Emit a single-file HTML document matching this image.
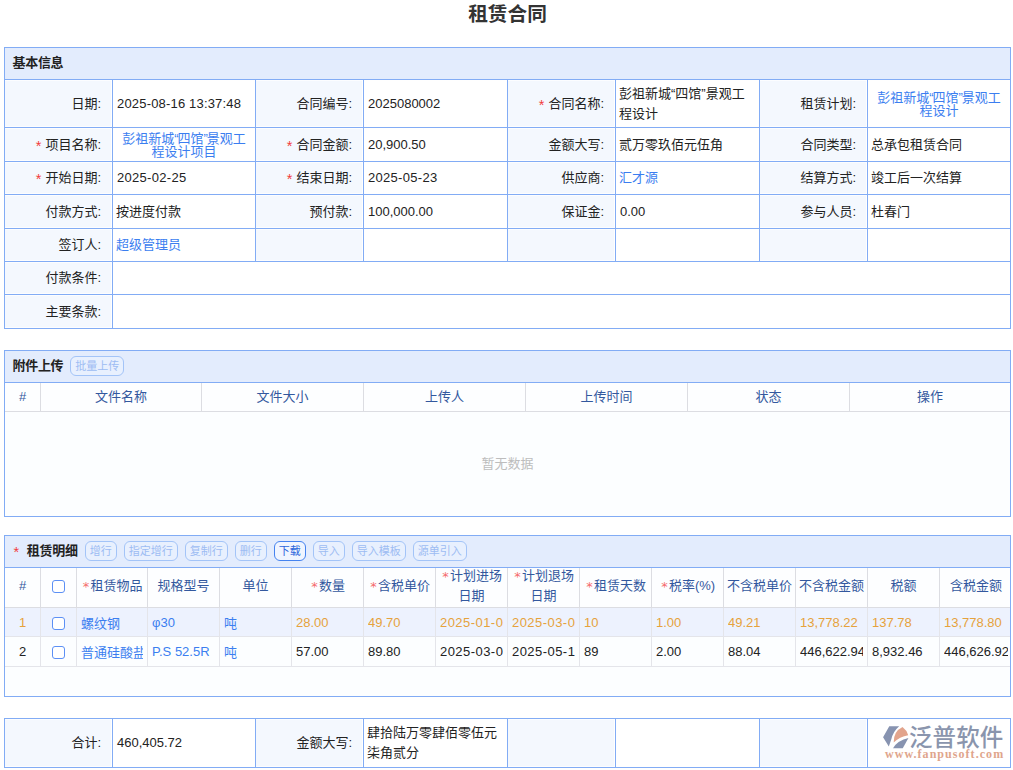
<!DOCTYPE html>
<html lang="zh-CN">
<head>
<meta charset="utf-8">
<title>租赁合同</title>
<style>
*{box-sizing:border-box;margin:0;padding:0}
html,body{width:1013px;height:770px;overflow:hidden;background:#fff}
body{font-family:"Liberation Sans","Noto Sans CJK SC",sans-serif;font-size:13px;color:#222;position:relative}
.title{position:absolute;left:1px;top:0;width:1013px;height:30px;line-height:28px;text-align:center;font-size:19.7px;font-weight:bold;color:#333}
.box{position:absolute;left:4px;width:1007px;border:1px solid #82acf5;background:#fff}
.hd{height:32px;line-height:30px;background:#e3ecfd;border-bottom:1px solid #82acf5;padding-left:7.5px;letter-spacing:-0.3px;font-weight:bold;color:#222;font-size:13px;white-space:nowrap}
table{border-collapse:collapse;table-layout:fixed}
.form{position:absolute;left:4px;width:1006px}
.form td{border:1px solid #82acf5;vertical-align:middle;font-size:13px;line-height:16px;overflow:hidden}
.form td.l{background:#f4f8fe;box-shadow:inset -1px 0 0 #fff,inset 0 1px 0 rgba(255,255,255,.7),inset 0 -1px 0 rgba(255,255,255,.7);text-align:right;padding-right:11px;white-space:nowrap}
.form td.v{background:#fff;padding-left:4px;padding-right:4px}
.req{color:#f23c3c;margin-right:4px;font-size:14.5px;line-height:10px;position:relative;top:2px}
a,.lk{color:#3b7ef0;text-decoration:none}
.form td.c{text-align:center;line-height:13px;font-size:13px;padding:1px 2px 0}
.q{letter-spacing:-1.2px}
.form td.k{padding-left:3px}

.btn{letter-spacing:0;display:inline-block;height:20px;line-height:18px;border:1px solid #a3c4f8;border-radius:6px;padding:0 4px;font-size:11px;font-weight:normal;color:#9dbcf3;vertical-align:middle;margin-left:7px;background:#e8f0fe;position:relative;top:-1px}
.btn.on{border-color:#4583f0;color:#2c67dc;background:#f0f5ff}
.grid{position:absolute;left:5px;width:1005px;border-collapse:separate;border-spacing:0;table-layout:fixed}
.grid th{font-weight:normal;color:#33589e;font-size:13px;text-align:center;border-right:1px solid #dcdde2;border-bottom:1px solid #dcdde2;background:#fdfeff;line-height:19px;white-space:nowrap;overflow:hidden;padding:0}
.grid td{font-size:13px;border-right:1px solid #e4e5ea;border-bottom:1px solid #e4e5ea;padding:0 0 0 4px;white-space:nowrap;overflow:hidden;color:#222}
.grid th:last-child,.grid td:last-child{border-right:none}
.grid tr.sel td{background:#edf2fe;color:#e6a23c}
.grid td.n{text-align:center;padding:0}
.grid td{padding:0 4px}
.ce{overflow:hidden;white-space:nowrap}
.h{position:relative;top:-2px;line-height:19.4px}
.grid .lk{color:#3b7ef0}
.cb{display:inline-block;width:13px;height:13px;border:1px solid #5c90f5;border-radius:3px;background:#fff;vertical-align:middle}
.r2{color:#f56c6c;display:inline-block;width:9px;text-align:center;font-family:"DejaVu Sans",sans-serif;font-size:13px;line-height:13px;position:relative;top:1px}
</style>
</head>
<body>
<div class="title">租赁合同</div>

<!-- section 1 -->
<div class="box" style="top:47px;height:33px;border-bottom:none"><div class="hd">基本信息</div></div>
<table class="form" style="top:79px">
<colgroup><col style="width:108px"><col style="width:143px"><col style="width:108px"><col style="width:144px"><col style="width:108px"><col style="width:144px"><col style="width:108px"><col style="width:143px"></colgroup>
<tr style="height:48px"><td class="l">日期:</td><td class="v" style="letter-spacing:.18px">2025-08-16 13:37:48</td><td class="l">合同编号:</td><td class="v">2025080002</td><td class="l"><span class="req">*</span>合同名称:</td><td class="v k" style="line-height:20px">彭祖新城“四馆”景观工程设计</td><td class="l">租赁计划:</td><td class="v c"><span class="lk">彭祖新城<span class="q">“</span>四馆<span class="q">”</span>景观工<br>程设计</span></td></tr>
<tr style="height:34px"><td class="l"><span class="req">*</span>项目名称:</td><td class="v c"><span class="lk">彭祖新城<span class="q">“</span>四馆<span class="q">”</span>景观工<br>程设计项目</span></td><td class="l"><span class="req">*</span>合同金额:</td><td class="v">20,900.50</td><td class="l">金额大写:</td><td class="v k">贰万零玖佰元伍角</td><td class="l">合同类型:</td><td class="v k">总承包租赁合同</td></tr>
<tr style="height:33px"><td class="l"><span class="req">*</span>开始日期:</td><td class="v" style="letter-spacing:.3px">2025-02-25</td><td class="l"><span class="req">*</span>结束日期:</td><td class="v" style="letter-spacing:.3px">2025-05-23</td><td class="l">供应商:</td><td class="v k"><span class="lk">汇才源</span></td><td class="l">结算方式:</td><td class="v k">竣工后一次结算</td></tr>
<tr style="height:34px"><td class="l">付款方式:</td><td class="v k">按进度付款</td><td class="l">预付款:</td><td class="v">100,000.00</td><td class="l">保证金:</td><td class="v">0.00</td><td class="l">参与人员:</td><td class="v k">杜春门</td></tr>
<tr style="height:33px"><td class="l">签订人:</td><td class="v k"><span class="lk">超级管理员</span></td><td class="l"></td><td class="v"></td><td class="l"></td><td class="v"></td><td class="l"></td><td class="v"></td></tr>
<tr style="height:33px"><td class="l">付款条件:</td><td class="v" colspan="7"></td></tr>
<tr style="height:34px"><td class="l">主要条款:</td><td class="v" colspan="7"></td></tr>
</table>

<!-- section 2 -->
<div class="box" style="top:350px;height:167px;background:#fcfeff"><div class="hd">附件上传<span class="btn" style="margin-left:7px">批量上传</span></div>
<div style="position:absolute;left:0;top:112px;width:1005px;text-align:center;font-size:13px;color:#bdbdbd;line-height:16px;top:105px">暂无数据</div></div>
<table class="grid" style="top:383px">
<colgroup><col style="width:36px"><col style="width:161px"><col style="width:162px"><col style="width:162px"><col style="width:162px"><col style="width:162px"><col style="width:160px"></colgroup>
<tr style="height:29px"><th><div class="h" style="top:-0.5px">#</div></th><th><div class="h" style="top:-0.5px">文件名称</div></th><th><div class="h" style="top:-0.5px">文件大小</div></th><th><div class="h" style="top:-0.5px">上传人</div></th><th><div class="h" style="top:-0.5px">上传时间</div></th><th><div class="h" style="top:-0.5px">状态</div></th><th><div class="h" style="top:-0.5px">操作</div></th></tr>
</table>

<!-- section 3 -->
<div class="box" style="top:535px;height:162px;background:#fcfeff"><div class="hd"><span class="req" style="font-weight:normal;margin-left:1px;margin-right:8px">*</span>租赁明细<span class="btn" style="margin-left:7px">增行</span><span class="btn">指定增行</span><span class="btn">复制行</span><span class="btn">删行</span><span class="btn on">下载</span><span class="btn">导入</span><span class="btn">导入模板</span><span class="btn">源单引入</span></div></div>
<div style="position:absolute;left:0;top:0;width:1010px;height:770px;overflow:hidden"><table class="grid" style="top:568px;width:1007px">
<colgroup><col style="width:36px"><col style="width:36px"><col style="width:71px"><col style="width:72px"><col style="width:72px"><col style="width:72px"><col style="width:72px"><col style="width:72px"><col style="width:72px"><col style="width:72px"><col style="width:72px"><col style="width:72px"><col style="width:72px"><col style="width:72px"><col style="width:72px"></colgroup>
<tr style="height:40px"><th><div class="h">#</div></th><th><div class="h"><span class="cb"></span></div></th><th><div class="h"><span class="r2">*</span>租赁物品</div></th><th><div class="h">规格型号</div></th><th><div class="h">单位</div></th><th><div class="h"><span class="r2">*</span>数量</div></th><th><div class="h"><span class="r2">*</span>含税单价</div></th><th><div class="h"><span class="r2">*</span>计划进场<br>日期</div></th><th><div class="h"><span class="r2">*</span>计划退场<br>日期</div></th><th><div class="h"><span class="r2">*</span>租赁天数</div></th><th><div class="h"><span class="r2">*</span>税率(%)</div></th><th><div class="h">不含税单价</div></th><th><div class="h">不含税金额</div></th><th><div class="h">税额</div></th><th><div class="h">含税金额</div></th></tr>
<tr class="sel" style="height:29px"><td class="n"><div class="ce">1</div></td><td class="n"><div class="ce"><span class="cb"></span></div></td><td><div class="ce"><span class="lk">螺纹钢</span></div></td><td><div class="ce"><span class="lk">φ30</span></div></td><td><div class="ce"><span class="lk">吨</span></div></td><td><div class="ce">28.00</div></td><td><div class="ce">49.70</div></td><td><div class="ce" style="letter-spacing:.45px">2025-01-0</div></td><td><div class="ce" style="letter-spacing:.45px">2025-03-0</div></td><td><div class="ce">10</div></td><td><div class="ce">1.00</div></td><td><div class="ce">49.21</div></td><td><div class="ce">13,778.22</div></td><td><div class="ce">137.78</div></td><td><div class="ce">13,778.80</div></td></tr>
<tr style="height:30px"><td class="n"><div class="ce">2</div></td><td class="n"><div class="ce"><span class="cb"></span></div></td><td><div class="ce"><span class="lk">普通硅酸盐</span></div></td><td><div class="ce"><span class="lk">P.S 52.5R</span></div></td><td><div class="ce"><span class="lk">吨</span></div></td><td><div class="ce">57.00</div></td><td><div class="ce">89.80</div></td><td><div class="ce" style="letter-spacing:.45px">2025-03-0</div></td><td><div class="ce" style="letter-spacing:.45px">2025-05-1</div></td><td><div class="ce">89</div></td><td><div class="ce">2.00</div></td><td><div class="ce">88.04</div></td><td><div class="ce">446,622.94</div></td><td><div class="ce">8,932.46</div></td><td><div class="ce">446,626.92</div></td></tr>
</table></div>

<!-- totals -->
<table class="form" style="top:718px">
<colgroup><col style="width:108px"><col style="width:143px"><col style="width:108px"><col style="width:144px"><col style="width:108px"><col style="width:144px"><col style="width:108px"><col style="width:143px"></colgroup>
<tr style="height:49px"><td class="l">合计:</td><td class="v">460,405.72</td><td class="l">金额大写:</td><td class="v k" style="line-height:20px">肆拾陆万零肆佰零伍元柒角贰分</td><td class="l"></td><td class="v"></td><td class="l"></td><td class="v"></td></tr>
</table>

<!-- logo -->
<svg style="position:absolute;left:878px;top:720px" width="40" height="34" viewBox="0 0 906 770"><path d="M115,390 L255,140 L480,140 Q340,260 300,440 L245,600 Z" fill="#8793b0"/><path d="M555,160 Q650,230 685,345 Q490,380 355,510 Q350,260 555,160 Z" fill="#e2a48c"/><path d="M690,410 L560,640 L340,640 Q450,460 690,410 Z" fill="#8793b0"/></svg>
<div id="lg1" style="position:absolute;left:909px;top:721px;font-size:23.5px;font-weight:500;line-height:34px;color:#8a95ad;letter-spacing:0.1px;white-space:nowrap">泛普软件</div>
<div id="lg2" style="position:absolute;left:885px;top:747px;font-family:'Liberation Serif',serif;font-weight:bold;font-size:12px;line-height:14px;color:#e0a58c;letter-spacing:1.05px;white-space:nowrap">www.fanpusoft.com</div>

</body>
</html>
